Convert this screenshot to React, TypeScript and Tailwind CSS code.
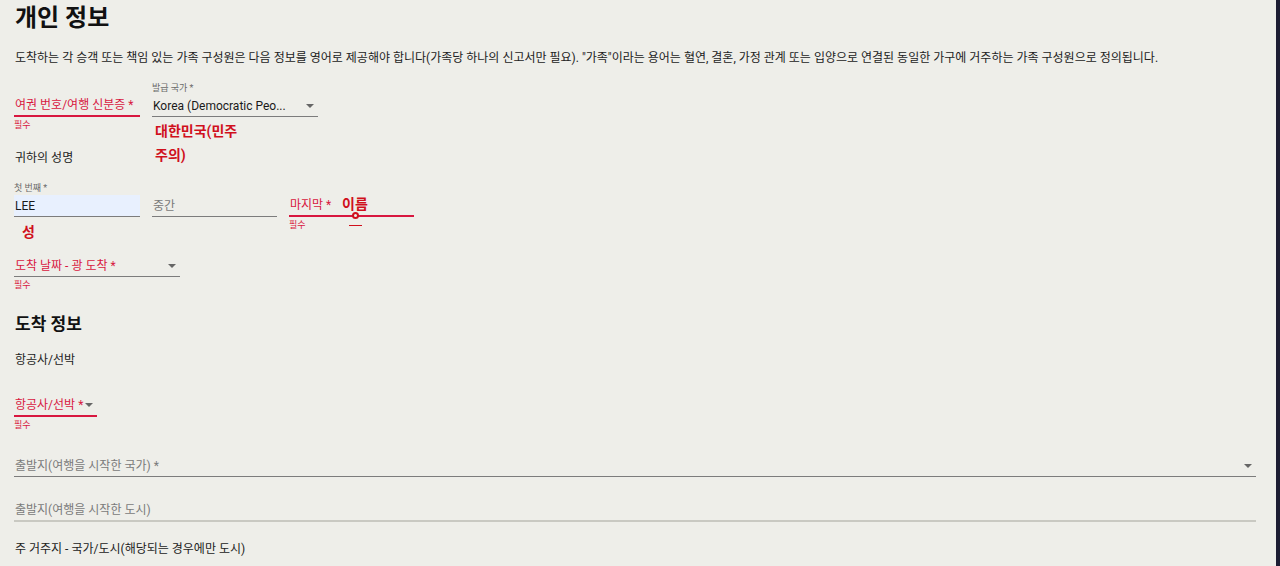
import React from 'react'

const font = { fontFamily: "Roboto, 'Noto Sans CJK KR', sans-serif" }

function Caret() {
  return (
    <svg width="8" height="4" viewBox="0 0 8 4" className="mr-[3px] shrink-0">
      <path d="M0 0 L8 0 L4 4 Z" fill="#666" />
    </svg>
  )
}

type FieldProps = {
  label?: string
  text: string
  width: string
  state?: 'error' | 'normal' | 'light'
  redText?: boolean
  value?: boolean
  filled?: boolean
  caret?: boolean
  helper?: boolean
  children?: React.ReactNode
}

function Field({ label, text, width, state = 'normal', redText, value, filled, caret, helper, children }: FieldProps) {
  const line =
    state === 'error'
      ? 'border-b-2 border-[#d8173f]'
      : state === 'light'
        ? 'border-b-2 border-[#c9c9c2]'
        : 'border-b border-[#7c7c7c]'
  const color =
    state === 'error' || redText ? 'text-[#d8173f]' : value ? 'text-[#1a1a1a]' : 'text-[#7a7a7a]'
  return (
    <div className={`relative flex flex-col ${width}`}>
      <div className="h-[14px] text-[9px] leading-[14px] text-[#6a6a6a]">{label}</div>
      <div className={`flex h-[22px] items-center justify-between px-px ${line} ${filled ? 'bg-[#e8f0fe]' : ''}`}>
        <span className={`text-[12px] ${color}`}>{text}</span>
        {caret && <Caret />}
      </div>
      <div className="h-[14px] text-[9px] leading-[16px] text-[#d8173f]">{helper ? '필수' : ''}</div>
      {children}
    </div>
  )
}

export default function App() {
  return (
    <div className="flex h-[566px] w-[1280px] overflow-hidden bg-[#eeeee9]" style={font}>
      <div className="flex-1 pl-[14px] pr-[20px]">
        <h1 className="pl-px text-[24px] font-bold leading-[36px] text-[#111]">개인 정보</h1>
        <p className="mt-[13px] pl-px text-[12px] leading-[18px] text-[#222]">
          도착하는 각 승객 또는 책임 있는 가족 구성원은 다음 정보를 영어로 제공해야 합니다(가족당 하나의 신고서만 필요). "가족"이라는 용어는 혈연, 결혼, 가정 관계 또는 입양으로 연결된 동일한 가구에 거주하는 가족 구성원으로 정의됩니다.
        </p>

        <div className="mt-[14px] flex gap-[12px]">
          <Field text="여권 번호/여행 신분증 *" width="w-[126px]" state="error" helper />
          <Field label="발급 국가 *" text="Korea (Democratic Peo..." width="w-[166px]" value caret>
            <div className="absolute left-[3px] top-[38px] text-[14px] font-bold leading-[24px] text-[#d0101c]">
              <div>대한민국(민주</div>
              <div>주의)</div>
            </div>
          </Field>
        </div>

        <div className="mt-[18px] pl-px text-[12px] leading-[18px] text-[#222]">귀하의 성명</div>

        <div className="mt-[14px] flex gap-[12px]">
          <Field label="첫 번째 *" text="LEE" width="w-[126px]" value filled>
            <div className="absolute left-[8px] top-[42px] text-[14px] font-bold leading-[18px] text-[#d0101c]">성</div>
          </Field>
          <Field text="중간" width="w-[125px]" />
          <Field text="마지막 *" width="w-[125px]" state="error" helper>
            <div className="absolute left-[53px] top-[14px] text-[14px] font-bold leading-[18px] text-[#d0101c]">이름</div>
            <div className="absolute left-[63px] top-[31px] h-[7px] w-[7px] rounded-full border-2 border-[#d0101c] bg-[#eeeee9]" />
            <div className="absolute left-[60px] top-[44px] h-px w-[13px] bg-[#d0101c]" />
          </Field>
        </div>

        <div className="mt-[10px]">
          <Field text="도착 날짜 - 광 도착 *" width="w-[166px]" redText caret helper />
        </div>

        <h2 className="mt-[21px] pl-px text-[17px] font-bold leading-[24px] text-[#111]">도착 정보</h2>
        <div className="mt-[15px] pl-px text-[12px] leading-[18px] text-[#222]">항공사/선박</div>

        <div className="mt-[12px]">
          <Field text="항공사/선박 *" width="w-[83px]" state="error" caret helper />
        </div>

        <div className="mt-[10px]">
          <Field text="출발지(여행을 시작한 국가) *" width="w-[1242px]" caret />
        </div>

        <div className="-mt-[5px]">
          <Field text="출발지(여행을 시작한 도시)" width="w-[1242px]" state="light" />
        </div>

        <div className="mt-[4px] pl-px text-[12px] leading-[18px] text-[#222]">
          주 거주지 - 국가/도시(해당되는 경우에만 도시)
        </div>
      </div>
      <div className="w-[4px] bg-[#1c1d33]" />
    </div>
  )
}
